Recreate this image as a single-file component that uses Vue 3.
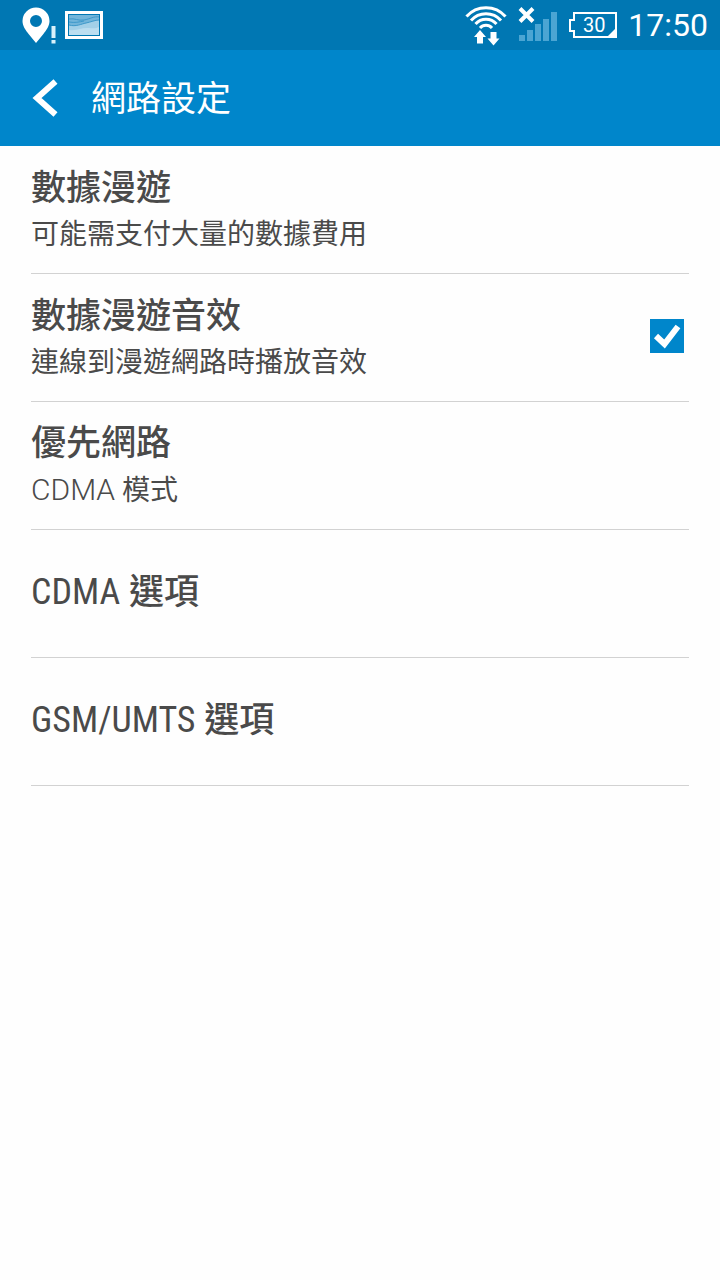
<template>
	<div class="screen">
		<div class="status-bar">
			<div class="status-group">
				<svg width="36" height="40" viewBox="0 0 36 40" aria-hidden="true">
					<path
						fill="#fff"
						fill-rule="evenodd"
						d="M14 2.500a13.500 13.500 0 0 1 13.500 13.500c0 5-3 9-6.500 13.500L14 38l-7-8.500C3.500 25 .5 21 .5 16A13.500 13.500 0 0 1 14 2.500zm0 7.500a6 6 0 1 0 0 12 6 6 0 0 0 0-12z"
					/>
					<path fill="#d9f1fb" d="M29.500 21h4v12h-4zM29.500 35h4v3.500h-4z" />
				</svg>
				<svg width="38" height="30" viewBox="0 0 38 30" aria-hidden="true">
					<path fill="#fff" fill-rule="evenodd" d="M0 1h38v28H0zM3 4v22h32V4z" />
					<path fill="#72b5da" d="M4 5h30v20H4z" />
					<path fill="#a3d0e8" d="M4 15c7 2 12-1 17-2s9-3 13-3v15H4z" />
					<path fill="#bcdef0" d="M4 20c8 1 12-2 18-2s8 1 12-1v8H4z" />
					<path
						fill="none"
						stroke="#3d98ca"
						d="M4 9c6-1 9 2 15 1s10-4 15-3M4 12c6 1 10 0 15-1M4 15c7 2 12-1 17-2s9-3 13-3"
					/>
				</svg>
			</div>
			<div class="status-group status-right">
				<svg width="42" height="42" viewBox="0 0 42 42" aria-hidden="true">
					<g fill="none" stroke="#fff" stroke-width="3">
						<path d="M1.500 12.500a26 26 0 0 1 39 0" />
						<path d="M6 16.500a20 20 0 0 1 30 0" />
						<path d="M10.500 20a14 14 0 0 1 21 0" />
						<path d="M15 24a8 8 0 0 1 12 0" />
					</g>
					<path fill="#fff" d="M15 26l6 7h-3v6.500h-6V33H9zM28.500 41.500l-6-7h3V28h6v6.500h3z" />
				</svg>
				<svg width="40" height="36" viewBox="0 0 40 36" aria-hidden="true">
					<path
						fill="#4ba5d3"
						d="M1 28h6v6H1zM9 23h6v11H9zM17 17h6v17h-6zM25 12h6v22h-6zM33 5h6v29h-6z"
					/>
					<path fill="none" stroke="#fff" stroke-width="4" d="M2 1.500l13 13M15 1.500l-13 13" />
				</svg>
				<div class="battery">
					<svg width="48" height="28" viewBox="0 0 48 28" aria-hidden="true">
						<path
							fill="none"
							stroke="#fff"
							stroke-width="2"
							d="M5 2h42v24H5v-6H1V9h4z"
						/>
						<path fill="#fff" d="M47 17v9h-9z" />
					</svg>
					<span class="battery-level">{{ battery }}</span>
				</div>
				<time class="clock">{{ clock }}</time>
			</div>
		</div>

		<header class="title-bar">
			<button class="back" type="button" aria-label="返回">
				<svg width="28" height="38" viewBox="0 0 28 38" aria-hidden="true">
					<path fill="none" stroke="#fff" stroke-width="6" d="M23.500 2.500L5 19l18.500 16.500" />
				</svg>
			</button>
			<h1>網路設定</h1>
		</header>

		<main class="settings">
			<template v-for="item in items" :key="item.id">
				<label v-if="item.toggle" class="row" :for="item.id">
					<span class="row-text">
						<span class="row-title">{{ item.title }}</span>
						<span class="row-summary">{{ item.summary }}</span>
					</span>
					<input :id="item.id" v-model="roamingSound" class="check" type="checkbox" />
				</label>
				<button v-else class="row" type="button">
					<span class="row-text">
						<span class="row-title">
							<span v-if="item.latin" class="latin">{{ item.latin }}</span>
							{{ item.title }}
						</span>
						<span v-if="item.summary" class="row-summary">
							<span v-if="item.mode" class="latin">{{ item.mode }}</span>
							{{ item.summary }}
						</span>
					</span>
				</button>
			</template>
		</main>
	</div>
</template>

<script setup>
import { ref } from "vue";

const battery = ref(30);
const clock = ref("17:50");
const roamingSound = ref(true);

const items = [
	{ id: "roaming", title: "數據漫遊", summary: "可能需支付大量的數據費用" },
	{
		id: "roaming-sound",
		title: "數據漫遊音效",
		summary: "連線到漫遊網路時播放音效",
		toggle: true,
	},
	{ id: "preferred", title: "優先網路", mode: "CDMA", summary: "模式" },
	{ id: "cdma", latin: "CDMA", title: "選項" },
	{ id: "gsm", latin: "GSM/UMTS", title: "選項" },
];
</script>

<style>
	body {
		background: #fefefe;
	}
</style>

<style scoped>
	.screen {
		min-height: 100vh;
		background: #fefefe;
		color: #4a4a4a;
		font-family: Roboto, "Noto Sans CJK TC", sans-serif;
	}

	.status-bar {
		display: flex;
		justify-content: space-between;
		align-items: center;
		height: 50px;
		padding: 0 12px 0 22px;
		background: #0077b3;
		color: #fff;
	}

	.status-group {
		display: flex;
		align-items: center;
		gap: 7px;
	}

	.status-group svg {
		display: block;
	}

	.status-right {
		gap: 11px;
	}

	.battery {
		display: grid;
		place-items: center;
	}

	.battery > * {
		grid-area: 1 / 1;
	}

	.battery-level {
		font-size: 20px;
		line-height: 28px;
		padding-left: 2px;
	}

	.clock {
		font-size: 32px;
		line-height: 50px;
	}

	.title-bar {
		display: flex;
		align-items: center;
		height: 96px;
		padding: 0 32px;
		gap: 31px;
		background: #0086cb;
		color: #fff;
	}

	.title-bar h1 {
		margin: 0;
		padding-top: 4px;
		font-size: 35px;
		font-weight: 400;
		line-height: 48px;
	}

	.back {
		display: block;
		padding: 0;
		border: none;
		background: none;
	}

	.back svg {
		display: block;
	}

	.settings {
		padding: 0 31px;
	}

	.row {
		display: flex;
		justify-content: space-between;
		align-items: center;
		box-sizing: border-box;
		width: 100%;
		min-height: 128px;
		padding: 0 5px 0 0;
		border: none;
		border-bottom: 1px solid #d2d2d2;
		background: none;
		color: inherit;
		font-family: inherit;
		text-align: left;
	}

	.row-text {
		display: flex;
		flex-direction: column;
		padding-top: 2px;
	}

	.row-title {
		font-size: 35px;
		font-weight: 500;
		line-height: 48px;
	}

	.row-title .latin {
		font-family: "Roboto Condensed", "Liberation Sans Narrow", Roboto, sans-serif;
		font-size: 36px;
		font-weight: 400;
	}

	.row-summary {
		font-size: 28px;
		line-height: 44px;
	}

	.row-summary .latin {
		font-size: 30px;
		font-weight: 300;
	}

	.row-text:has(.row-title:only-child) {
		padding: 0 0 2px;
	}

	.check {
		appearance: none;
		flex: none;
		width: 34px;
		height: 34px;
		margin: 0 0 4px;
		border: 2px solid #0086cb;
		background: #fefefe;
	}

	.check:checked {
		background: #0086cb
			url("data:image/svg+xml,%3Csvg xmlns='http://www.w3.org/2000/svg' viewBox='0 0 30 30'%3E%3Cpath d='M4 15l8.500 8L26 5.500' fill='none' stroke='%23fff' stroke-width='6'/%3E%3C/svg%3E")
			center / 30px no-repeat;
	}
</style>
